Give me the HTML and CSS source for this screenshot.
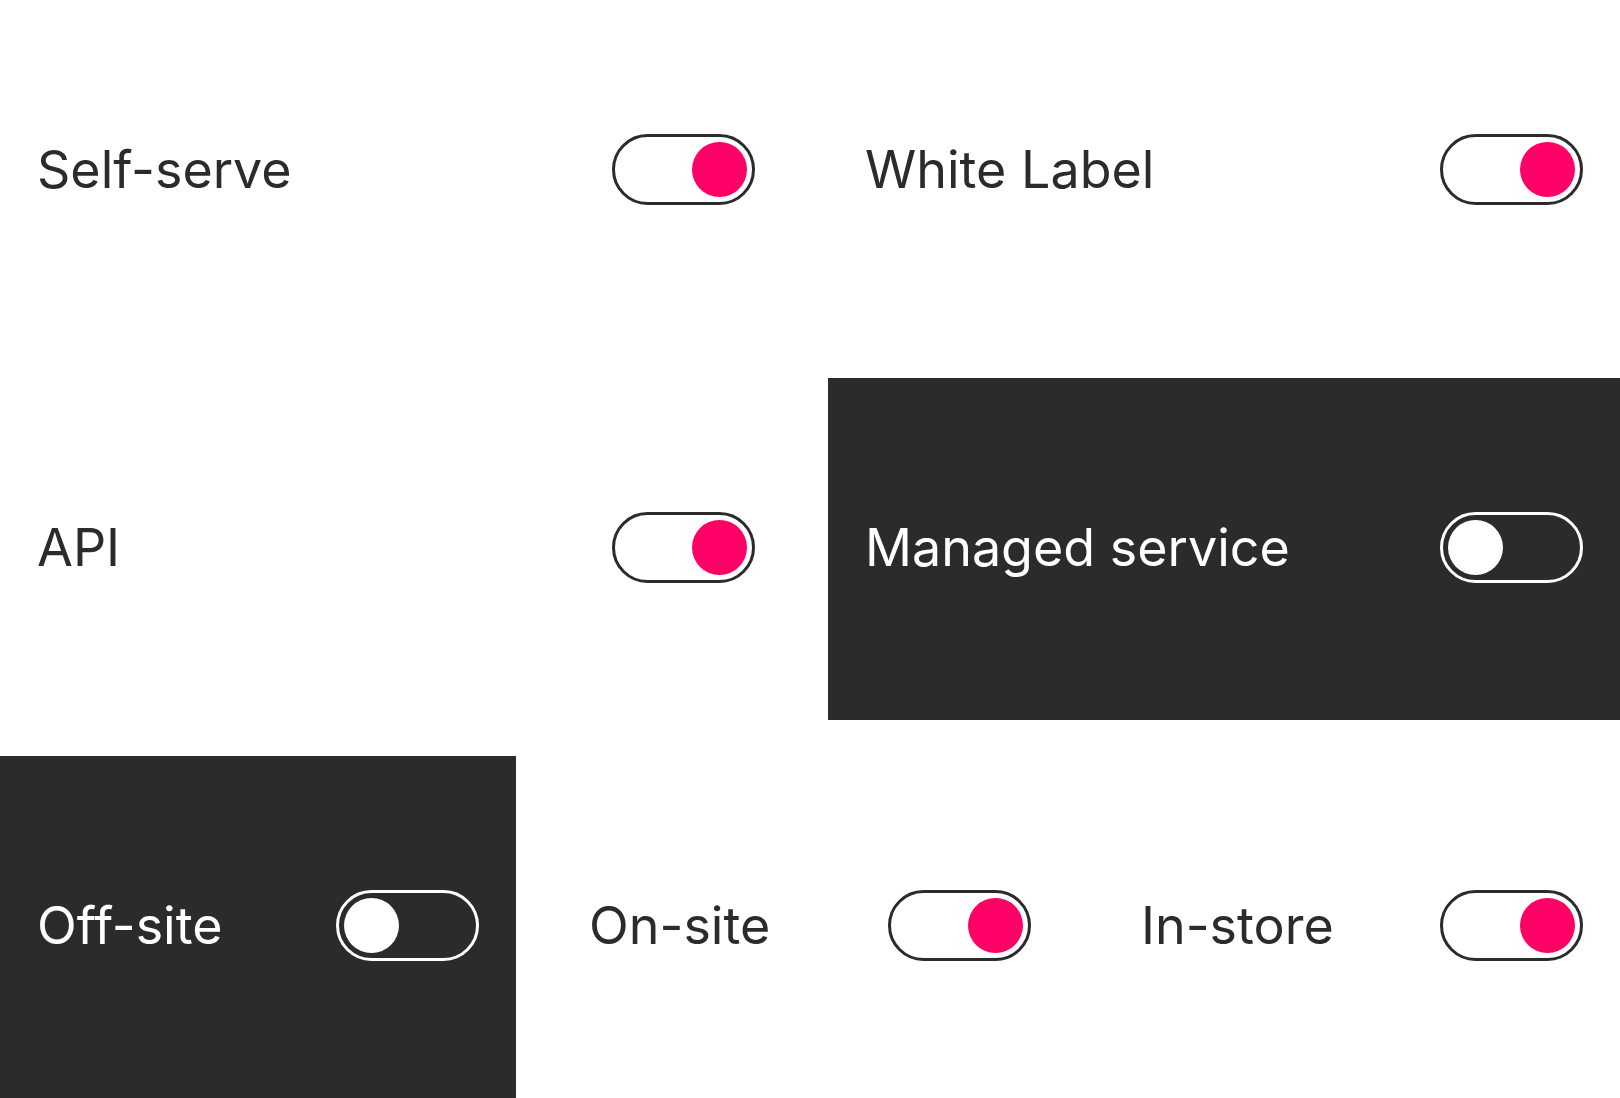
FILE: index.html
```html
<!DOCTYPE html>
<html lang="en">
<head>
    <meta charset="UTF-8">
    <meta name="viewport" content="width=device-width, initial-scale=1.0">
    <title>Service options</title>
    <link rel="stylesheet" href="styles.css">
</head>
<body>
    <div class="board">
        <div class="row">
            <div class="option">
                <span class="label">Self-serve</span>
                <span class="toggle on"><span class="knob"></span></span>
            </div>
            <div class="option">
                <span class="label">White Label</span>
                <span class="toggle on"><span class="knob"></span></span>
            </div>
        </div>
        <div class="row">
            <div class="option">
                <span class="label">API</span>
                <span class="toggle on"><span class="knob"></span></span>
            </div>
            <div class="option dark">
                <span class="label">Managed service</span>
                <span class="toggle"><span class="knob"></span></span>
            </div>
        </div>
        <div class="row">
            <div class="option dark">
                <span class="label">Off-site</span>
                <span class="toggle"><span class="knob"></span></span>
            </div>
            <div class="option">
                <span class="label">On-site</span>
                <span class="toggle on"><span class="knob"></span></span>
            </div>
            <div class="option">
                <span class="label">In-store</span>
                <span class="toggle on"><span class="knob"></span></span>
            </div>
        </div>
    </div>
</body>
</html>
```

FILE: styles.css
```css
body {
    margin: 0;
    padding: 0;
    background-color: #fff;
    font-family: Inter, "Liberation Sans", sans-serif;
}
.board {
    display: flex;
    flex-direction: column;
    gap: 36px;
    height: 1098px;
}
.row {
    display: flex;
    gap: 36px;
    height: 342px;
}
.option {
    flex: 1;
    display: flex;
    align-items: center;
    justify-content: space-between;
    padding: 0 37px;
    color: #2b2b2b;
}
.option.dark {
    background-color: #2b2b2b;
    color: #fff;
}
.label {
    font-size: 52px;
    line-height: 1;
    margin-top: -2px;
}
.toggle {
    box-sizing: border-box;
    width: 143px;
    height: 71px;
    margin-top: -3px;
    border: 3px solid #2b2b2b;
    border-radius: 36px;
    padding: 5px;
    display: flex;
    justify-content: flex-start;
}
.toggle.on {
    background-color: #fff;
    justify-content: flex-end;
}
.dark .toggle {
    border-color: #fff;
}
.knob {
    width: 55px;
    height: 55px;
    border-radius: 50%;
    background-color: #fff;
}
.toggle.on .knob {
    background-color: #ff0066;
}
```
